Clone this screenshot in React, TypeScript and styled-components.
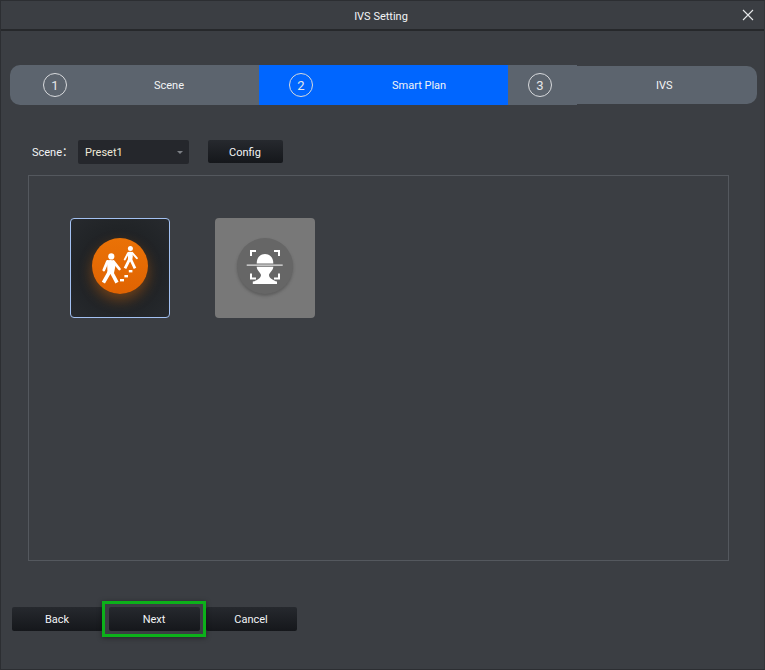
import React from "react";
import styled, { createGlobalStyle } from "styled-components";

const Global = createGlobalStyle`
  html, body { margin: 0; padding: 0; background: #3b3e43; }
  * { box-sizing: border-box; }
`;

const Window = styled.div`
  position: relative;
  width: 765px;
  height: 670px;
  background: #3b3e43;
  border-left: 1px solid #2c2e32;
  border-top: 1px solid #2c2e32;
  border-right: 1px solid #333539;
  border-bottom: 1px solid #2c2e32;
  color: #f2f4f6;
  font-family: "Roboto", "Noto Sans CJK SC", sans-serif;
  font-size: 11px;
  display: flex;
  flex-direction: column;
`;

const TitleBar = styled.header`
  position: relative;
  height: 30px;
  flex: none;
  display: flex;
  align-items: center;
  justify-content: center;
  padding: 3px 3px 0 0;
  border-bottom: 2px solid #26282b;
`;

const CloseButton = styled.button`
  position: absolute;
  right: 10px;
  top: 8px;
  width: 12px;
  height: 12px;
  padding: 0;
  border: 0;
  background: none;
  display: flex;
`;

const Stepper = styled.nav`
  margin: 34px 7px 0 9px;
  height: 40px;
  display: flex;
  align-items: center;
`;

const Step = styled.div<{ $active?: boolean; $first?: boolean; $width: number; $pad: number; $gap: number }>`
  width: ${(p) => p.$width}px;
  height: 40px;
  flex: none;
  display: flex;
  align-items: center;
  padding-left: ${(p) => p.$pad}px;
  gap: ${(p) => p.$gap}px;
  background: ${(p) => (p.$active ? "#0066ff" : "#5c646e")};
  border-radius: ${(p) => (p.$first ? "10px 0 0 10px" : "0")};
`;

const StepTail = styled.div`
  flex: 1;
  height: 38px;
  display: flex;
  align-items: center;
  padding-left: 79px;
  background: #5c646e;
  border-radius: 0 10px 10px 0;
`;

const StepNumber = styled.span`
  width: 24px;
  height: 24px;
  flex: none;
  border: 1px solid #d8dadd;
  border-radius: 50%;
  display: flex;
  align-items: center;
  justify-content: center;
  font-size: 13px;
  color: #e4e6e8;
`;

const SceneRow = styled.div`
  margin: 35px 0 0 31px;
  height: 24px;
  display: flex;
  align-items: center;
`;

const SceneLabel = styled.label`
  width: 46px;
  flex: none;
  margin-top: -2px;
`;

const Select = styled.div`
  width: 111px;
  height: 24px;
  padding: 0 7px;
  display: flex;
  align-items: center;
  justify-content: space-between;
  background: #25272c;
  border-radius: 2px;
  color: #eee8d8;
`;

const Caret = styled.span`
  width: 0;
  height: 0;
  margin-right: -1px;
  border-left: 3px solid transparent;
  border-right: 3px solid transparent;
  border-top: 3px solid #7d8085;
`;

const Button = styled.button<{ $width: number; $height: number }>`
  width: ${(p) => p.$width}px;
  height: ${(p) => p.$height}px;
  flex: none;
  padding: 0 1px 0 0;
  border: 0;
  border-radius: 2px;
  background: linear-gradient(#26292e, #15171b);
  color: #f2f4f6;
  font: inherit;
`;

const ConfigButton = styled(Button)`
  margin: 0 0 1px 19px;
  padding: 2px 1px 0 0;
`;

const Panel = styled.section`
  margin: 11px 0 0 27px;
  width: 701px;
  height: 386px;
  border: 1px solid #54585e;
  padding: 42px 0 0 41px;
  display: flex;
  align-items: flex-start;
  gap: 45px;
`;

const PlanCard = styled.div<{ $selected?: boolean }>`
  width: 100px;
  height: 100px;
  flex: none;
  display: flex;
  justify-content: center;
  padding-top: 20px;
  border-radius: 4px;
  border: ${(p) => (p.$selected ? "1px solid #a3c1f2" : "0")};
  background: ${(p) =>
    p.$selected ? "radial-gradient(circle at 50% 50%, #1b1e21 0%, #212427 60%, #272a2e 100%)" : "#787878"};
`;

const PlanDisc = styled.div<{ $selected?: boolean }>`
  width: 56px;
  height: 56px;
  margin-top: ${(p) => (p.$selected ? "-1px" : "0")};
  border-radius: 50%;
  background: ${(p) => (p.$selected ? "linear-gradient(#ea7206, #e06302)" : "#666666")};
  box-shadow: ${(p) =>
    p.$selected ? "0 6px 14px 0 rgba(226, 110, 10, 0.42)" : "0 2px 3px rgba(60, 60, 60, 0.45)"};
`;

const Footer = styled.footer`
  margin: 46px 0 0 11px;
  display: flex;
  gap: 6px;
`;

const Highlight = styled.div`
  position: absolute;
  left: 101px;
  top: 600px;
  width: 104px;
  height: 36px;
  border: 3px solid #0cb11a;
  box-shadow: 0 1px 5px rgba(0, 0, 0, 0.4);
  pointer-events: none;
`;

const Walkers = () => (
  <svg width="56" height="56" viewBox="0 0 56 56" fill="none">
    <circle cx="19.3" cy="18.4" r="3.1" fill="#fff" />
    <path d="M15 22.6 Q18.5 21.4 22 22.8 L23.4 28 L21.8 36 L15.5 35 Z" fill="#fff" />
    <path d="M15.5 23.4 L11.8 32 M21.5 23.6 L27.4 31" stroke="#fff" strokeWidth="2.8" strokeLinecap="round" />
    <path d="M17.4 34 L11.4 44.6 M19.4 34 L25 44.6" stroke="#fff" strokeWidth="3.6" strokeLinecap="butt" />
    <circle cx="38.4" cy="10.6" r="2.5" fill="#fff" />
    <path d="M36 14 Q38.4 13.2 40.6 14.2 L40.8 18.4 L40 23.4 L36 22.8 Z" fill="#fff" />
    <path d="M36.2 15 L32.8 21.4 M40.2 14.8 L44.8 20.2" stroke="#fff" strokeWidth="2" strokeLinecap="round" />
    <path d="M37.2 22 L33 30.4 M39 22 L43 30.4" stroke="#fff" strokeWidth="2.8" strokeLinecap="butt" />
    <rect x="28" y="41" width="4" height="2.4" fill="#fff" />
    <rect x="32.4" y="37" width="3.6" height="2.4" fill="#fff" />
    <rect x="36.8" y="32" width="3.6" height="2.4" fill="#fff" />
  </svg>
);

const FaceScan = () => (
  <svg width="56" height="56" viewBox="0 0 56 56" fill="none">
    <path d="M14 18 V13 H19 M37 13 H42 V18 M14 35.5 V40.5 H19 M37 40.5 H42 V35.5" stroke="#fff" strokeWidth="2" />
    <path d="M19.7 25.4 C19.7 19.4 23.2 16 28 16 C32.8 16 36.3 19.4 36.3 25.4 Z" fill="#fff" />
    <rect x="9.7" y="26.6" width="36" height="1" fill="#fff" />
    <path d="M19.7 28.8 H36.3 C36.3 32.5 32.4 34.5 32 37 C32 40.2 36.5 42.5 40 43.6 V46 H15.8 V43.6 C19.5 42.5 24 40.2 24 37 C23.6 34.5 19.7 32.5 19.7 28.8 Z" fill="#fff" />
  </svg>
);

export default function App() {
  return (
    <>
      <Global />
      <Window>
        <TitleBar>
          IVS Setting
          <CloseButton aria-label="Close">
            <svg width="12" height="12" viewBox="0 0 12 12">
              <path d="M1 1 L11 11 M11 1 L1 11" stroke="#e6e8ea" strokeWidth="1.1" />
            </svg>
          </CloseButton>
        </TitleBar>
        <Stepper>
          <Step $first $width={249} $pad={33} $gap={87}>
            <StepNumber>1</StepNumber>
            <span>Scene</span>
          </Step>
          <Step $active $width={249} $pad={30} $gap={79}>
            <StepNumber>2</StepNumber>
            <span>Smart Plan</span>
          </Step>
          <Step $width={69} $pad={20} $gap={0}>
            <StepNumber>3</StepNumber>
          </Step>
          <StepTail>IVS</StepTail>
        </Stepper>
        <SceneRow>
          <SceneLabel>Scene：</SceneLabel>
          <Select>
            Preset1
            <Caret />
          </Select>
          <ConfigButton $width={75} $height={23}>Config</ConfigButton>
        </SceneRow>
        <Panel>
          <PlanCard $selected>
            <PlanDisc $selected>
              <Walkers />
            </PlanDisc>
          </PlanCard>
          <PlanCard>
            <PlanDisc>
              <FaceScan />
            </PlanDisc>
          </PlanCard>
        </Panel>
        <Footer>
          <Button $width={91} $height={24}>Back</Button>
          <Button $width={91} $height={24}>Next</Button>
          <Button $width={91} $height={24}>Cancel</Button>
        </Footer>
        <Highlight />
      </Window>
    </>
  );
}
